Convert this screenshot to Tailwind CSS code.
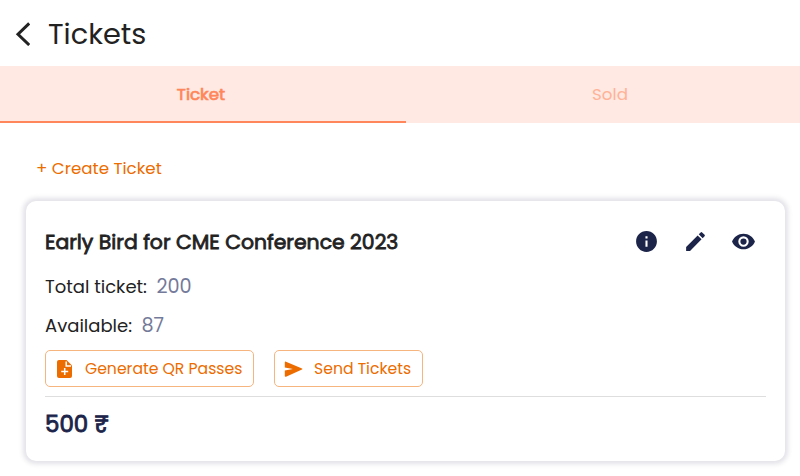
<!DOCTYPE html>
<html lang="en">
<head>
  <meta charset="UTF-8" />
  <meta name="viewport" content="width=device-width, initial-scale=1.0" />
  <title>Tickets</title>
  <script src="https://cdn.jsdelivr.net/npm/@tailwindcss/browser@4"></script>
</head>
<body class="h-[476px] bg-white text-[#222222] font-[Poppins,Inter,sans-serif] overflow-hidden">

  <!-- Header -->
  <header class="flex items-center h-[66px] pl-[15px] pt-[2px]">
    <svg class="w-[15px] h-6 mr-[18px]" viewBox="0 0 15 24" fill="none" stroke="#222222" stroke-width="3"><path d="M14.2 1.4 3 12.3 14.2 23" /></svg>
    <h1 class="text-[28.8px] leading-none whitespace-nowrap">Tickets</h1>
  </header>

  <!-- Tabs -->
  <nav class="flex h-[57px] bg-[#ffe9e2] overflow-hidden text-[16.7px] text-[#ff855a]">
    <a href="#" class="-ml-[3px] w-[409px] shrink-0 flex items-center justify-center pt-[2px] pr-px border-b-2 border-[#ff855a] [-webkit-text-stroke:0.7px]">Ticket</a>
    <a href="#" class="w-[409px] shrink-0 flex items-center justify-center pt-[2px] pr-px border-b-2 border-transparent text-[#ffb297]">Sold</a>
  </nav>

  <main class="pl-[26px] pr-[15px]">
    <div class="h-[78px] pl-[10px] pt-[33px]">
      <a href="#" class="block text-[16.7px] leading-[25px] text-[#ec6c00] whitespace-nowrap">+ Create Ticket</a>
    </div>

    <!-- Ticket card -->
    <section class="h-[260px] rounded-[10px] bg-white px-[19px] pt-[26px] shadow-[0_0_5px_3px_#e2e2e8]">
      <div class="flex items-center justify-between h-[30px] pr-[10px]">
        <h2 class="text-[20.4px] whitespace-nowrap [-webkit-text-stroke:0.8px]">Early Bird for CME Conference 2023</h2>
        <div class="flex items-center gap-[23.5px] -mt-[2px] text-[#1c2449]">
          <svg class="w-[25px] h-[25px]" viewBox="0 0 24 24" fill="currentColor"><path d="M12 2C6.48 2 2 6.48 2 12s4.48 10 10 10 10-4.48 10-10S17.52 2 12 2zm1 15h-2v-6h2v6zm0-8h-2V7h2v2z" /></svg>
          <svg class="w-[25px] h-[25px]" viewBox="0 0 24 24" fill="currentColor"><path d="M3 17.25V21h3.75L17.81 9.94l-3.75-3.75L3 17.25zM20.71 7.04a1 1 0 0 0 0-1.41l-2.34-2.34a1 1 0 0 0-1.41 0l-1.83 1.83 3.75 3.75 1.83-1.83z" /></svg>
          <svg class="w-[25px] h-[25px]" viewBox="0 0 24 24" fill="currentColor"><path d="M12 4.5C7 4.5 2.73 7.61 1 12c1.73 4.39 6 7.5 11 7.5s9.27-3.11 11-7.5c-1.73-4.39-6-7.5-11-7.5zM12 17a5 5 0 1 1 0-10 5 5 0 0 1 0 10zm0-8a3 3 0 1 0 0 6 3 3 0 0 0 0-6z" /></svg>
        </div>
      </div>

      <p class="flex items-center h-[39px] mt-[10px] text-lg whitespace-nowrap"><span>Total ticket:</span><span class="ml-[9.5px] text-[19.2px] text-[#747a99]">200</span></p>
      <p class="flex items-center h-[39px] text-lg whitespace-nowrap"><span>Available:</span><span class="ml-[9.5px] text-[19.2px] text-[#747a99]">87</span></p>

      <div class="flex gap-5 mt-[5px] text-[15.65px] text-[#ec6c00]">
        <button class="flex items-center w-[209px] h-[37px] pl-[9px] border border-[#f6b47e] rounded-[5px] whitespace-nowrap">
          <svg class="w-5 h-[22px] mr-[10px]" viewBox="0 0 20 22"><path fill="currentColor" d="M4 2h7.5L17 7.6V18a2 2 0 0 1-2 2H4a2 2 0 0 1-2-2V4a2 2 0 0 1 2-2z" /><path fill="none" stroke="#fff" stroke-width="1.5" d="M11.2 3.5V8H16M9.7 10v7M6.2 13.5h7" /></svg>
          <span>Generate QR Passes</span>
        </button>
        <button class="flex items-center w-[149px] h-[37px] pl-[9px] border border-[#f6b47e] rounded-[5px] whitespace-nowrap">
          <svg class="w-5 h-5 mr-[10px]" viewBox="0 0 20 20" fill="currentColor"><path d="M.8 17V11.5L9 10 .8 8.4V3.500c0-.7.6-1.100 1.200-.8L18 9.400c.5.200.5.900 0 1.100L2 17.700c-.6.300-1.200 0-1.200-.7z" /></svg>
          <span>Send Tickets</span>
        </button>
      </div>

      <div class="mt-[9px] border-t border-[#dedede] pt-3">
        <p class="text-[22.9px] leading-[30px] text-[#1c2449] whitespace-nowrap [-webkit-text-stroke:0.9px]">500 ₹</p>
      </div>
    </section>
  </main>

</body>
</html>
